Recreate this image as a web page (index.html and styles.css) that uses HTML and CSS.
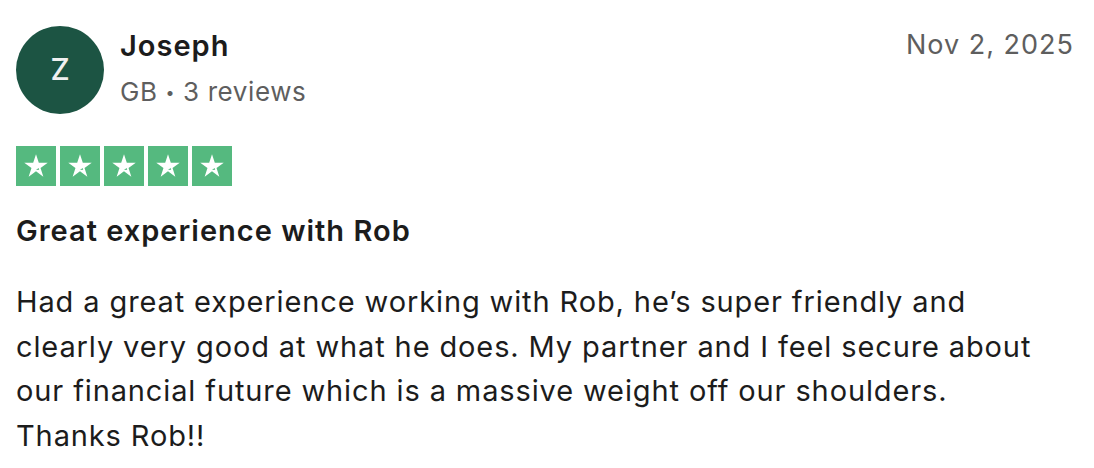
FILE: index.html
```html
<!DOCTYPE html>
<html lang="en">
<head>
<meta charset="utf-8">
<link rel="stylesheet" href="styles.css">
</head>
<body>
<article class="review">
  <header class="review-head">
    <div class="consumer">
      <div class="avatar">Z</div>
      <div class="consumer-info">
        <div class="name">Joseph</div>
        <div class="meta">GB <span class="dot">•</span> 3 reviews</div>
      </div>
    </div>
    <time class="date">Nov 2, 2025</time>
  </header>
  <div class="stars">
    <span class="star"><svg viewBox="0 0 24 24"><path d="M12 3.2l2.1 6.4h6.7l-5.4 3.9 2.1 6.5-5.5-4-5.5 4 2.1-6.5-5.4-3.9h6.7z" fill="#fff"/><path d="M14.4 14.9l-.4-1.4-2 1.5z" fill="#55b97f"/></svg></span>
    <span class="star"><svg viewBox="0 0 24 24"><path d="M12 3.2l2.1 6.4h6.7l-5.4 3.9 2.1 6.5-5.5-4-5.5 4 2.1-6.5-5.4-3.9h6.7z" fill="#fff"/><path d="M14.4 14.9l-.4-1.4-2 1.5z" fill="#55b97f"/></svg></span>
    <span class="star"><svg viewBox="0 0 24 24"><path d="M12 3.2l2.1 6.4h6.7l-5.4 3.9 2.1 6.5-5.5-4-5.5 4 2.1-6.5-5.4-3.9h6.7z" fill="#fff"/><path d="M14.4 14.9l-.4-1.4-2 1.5z" fill="#55b97f"/></svg></span>
    <span class="star"><svg viewBox="0 0 24 24"><path d="M12 3.2l2.1 6.4h6.7l-5.4 3.9 2.1 6.5-5.5-4-5.5 4 2.1-6.5-5.4-3.9h6.7z" fill="#fff"/><path d="M14.4 14.9l-.4-1.4-2 1.5z" fill="#55b97f"/></svg></span>
    <span class="star"><svg viewBox="0 0 24 24"><path d="M12 3.2l2.1 6.4h6.7l-5.4 3.9 2.1 6.5-5.5-4-5.5 4 2.1-6.5-5.4-3.9h6.7z" fill="#fff"/><path d="M14.4 14.9l-.4-1.4-2 1.5z" fill="#55b97f"/></svg></span>
  </div>
  <h2 class="title">Great experience with Rob</h2>
  <p class="body">Had a great experience working with Rob, he’s super friendly and clearly very good at what he does. My partner and I feel secure about our financial future which is a massive weight off our shoulders. Thanks Rob!!</p>
</article>
</body>
</html>
```
FILE: styles.css
```css
* { box-sizing: border-box; }
html, body { margin: 0; padding: 0; background: #fff; }
body {
  font-family: Inter, "Noto Sans", sans-serif;
  color: #1c1c1c;
}
.review {
  padding: 26px 20px 0 16px;
  display: flex;
  flex-direction: column;
}
.review-head {
  display: flex;
  justify-content: space-between;
  align-items: flex-start;
}
.consumer {
  display: flex;
  align-items: center;
  gap: 16px;
}
.avatar {
  width: 88px;
  height: 88px;
  border-radius: 50%;
  background: #1c5443;
  color: #f0f0f0;
  font-size: 30px;
  font-weight: 500;
  display: flex;
  align-items: center;
  justify-content: center;
  padding-bottom: 2px;
}
.consumer-info {
  display: flex;
  flex-direction: column;
  gap: 14px;
  margin-top: -2px;
}
.name {
  font-size: 29px;
  font-weight: 600;
  letter-spacing: 1px;
  color: #1c1c1c;
  line-height: 32px;
}
.meta {
  font-size: 26px;
  color: #5e5e5e;
  line-height: 32px;
  letter-spacing: 0.6px;
}
.dot { font-size: 16px; vertical-align: 3px; }
.date {
  font-size: 27px;
  color: #5e5e5e;
  line-height: 32px;
  letter-spacing: 1px;
  margin-top: 3px;
}
.stars {
  display: flex;
  gap: 4px;
  margin-top: 32px;
}
.star {
  width: 40px;
  height: 40px;
  background: #55b97f;
  display: flex;
  align-items: center;
  justify-content: center;
}
.star svg { width: 32px; height: 32px; display: block; }
.title {
  margin: 28px 0 0;
  font-size: 29px;
  font-weight: 600;
  letter-spacing: 1px;
  line-height: 34px;
  color: #1c1c1c;
}
.body {
  margin: 32px 0 0;
  max-width: 1040px;
  font-size: 29px;
  letter-spacing: 0.88px;
  line-height: 44.5px;
  color: #1c1c1c;
}
```
